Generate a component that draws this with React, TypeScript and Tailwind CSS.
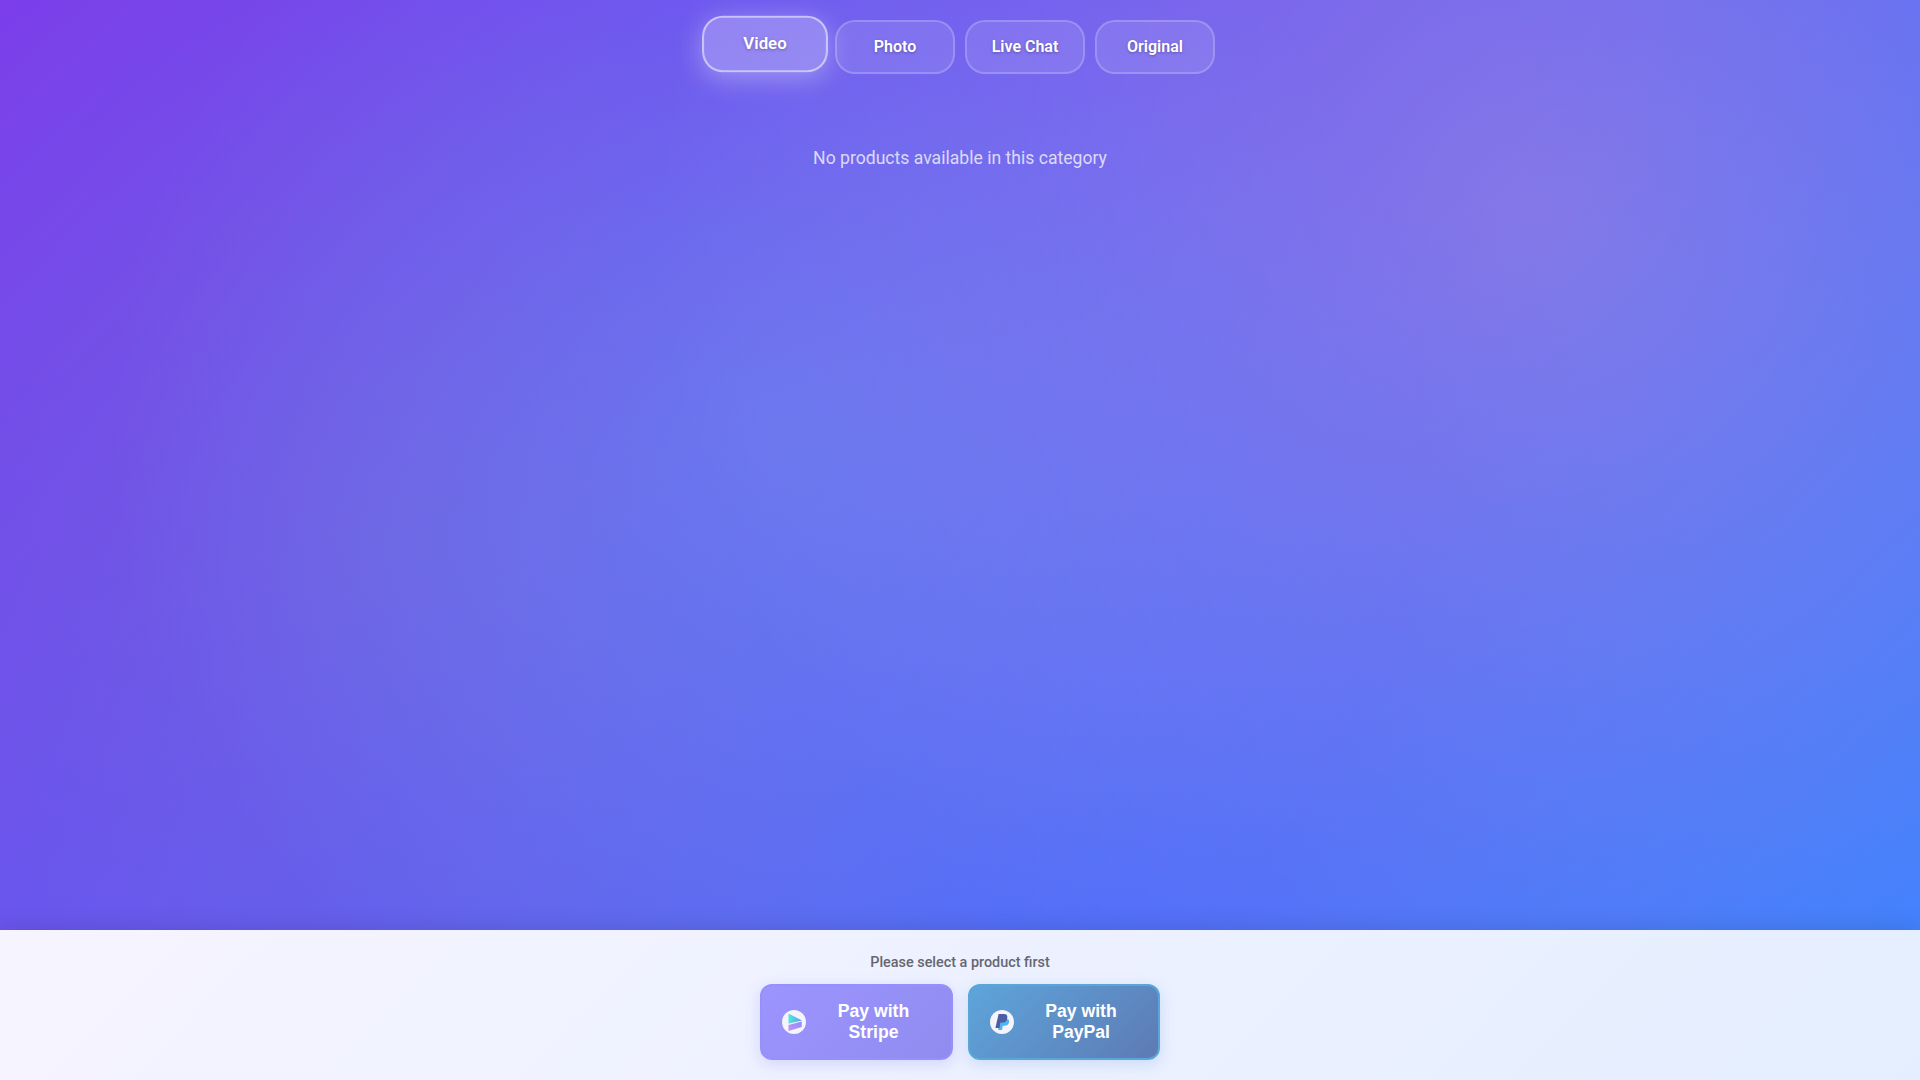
function StripeIcon() {
  return (
    <svg viewBox="0 0 24 24" className="w-6 h-6 shrink-0">
      <defs>
        <linearGradient id="stripeTop" x1="0" y1="0" x2="1" y2="0">
          <stop offset="0" stopColor="#56e6da" />
          <stop offset="1" stopColor="#5f9df5" />
        </linearGradient>
        <linearGradient id="stripeBottom" x1="0" y1="1" x2="1" y2="0">
          <stop offset="0" stopColor="#c094f6" />
          <stop offset="1" stopColor="#8f8cf6" />
        </linearGradient>
      </defs>
      <circle cx="12" cy="12" r="12" fill="#f5f3fb" />
      <path d="M6.5 3.5 L20 10.5 L6.5 13.8 Z" fill="url(#stripeTop)" />
      <path d="M6.5 15 L19.7 11.6 L19.7 17 L6.5 21 Z" fill="url(#stripeBottom)" />
    </svg>
  );
}

function PaypalIcon() {
  return (
    <svg viewBox="0 0 24 24" className="w-6 h-6 shrink-0">
      <circle cx="12" cy="12" r="12" fill="#f5f3fb" />
      <path d="M10 9 H16.5 C18.8 9 19.6 10.6 19 12.6 C18.4 15 16.6 15.8 14.6 15.8 H12.8 L12 20 H8.2 Z" fill="#4fb4f0" />
      <path d="M8.6 4 H14 C16.8 4 17.8 5.8 17.2 8.4 C16.6 11.4 14.6 12.6 12.2 12.6 H10.4 L9.5 18 H5.4 Z" fill="#4e5ca6" />
    </svg>
  );
}

const tabs = ['Video', 'Photo', 'Live Chat', 'Original'];

export default function App() {
  return (
    <div className="h-screen flex flex-col overflow-hidden font-['Roboto',sans-serif] bg-[radial-gradient(circle_at_40%_40%,rgba(120,219,255,0.2),transparent_50%),radial-gradient(circle_at_80%_20%,rgba(255,170,190,0.27),transparent_50%),radial-gradient(circle_at_20%_50%,rgba(120,119,198,0.35),transparent_50%),linear-gradient(135deg,#7c3aed_0%,#3b85ff_100%)]">
      <main className="flex-1 min-h-0 pt-5">
        <div className="flex justify-center gap-[10px]">
          {tabs.map((t, i) => (
            <button
              key={t}
              className={
                i === 0
                  ? "w-[120px] h-[54px] pb-px rounded-[20px] bg-white/25 border-2 border-white/50 text-white text-base font-semibold leading-[19px] [text-shadow:0_1px_3px_rgba(0,0,0,0.3)] -translate-y-[3px] scale-105 shadow-[0_5px_25px_rgba(255,255,255,0.35)]"
                  : "w-[120px] h-[54px] pb-px rounded-[20px] bg-white/10 border-2 border-white/20 text-white text-base font-semibold leading-[19px] [text-shadow:0_1px_3px_rgba(0,0,0,0.3)]"
              }
            >
              {t}
            </button>
          ))}
        </div>
        <p className="mt-[74px] text-center text-[17.6px] leading-[21px] text-white/75">No products available in this category</p>
      </main>
      <footer className="relative h-[150px] shrink-0 pt-6 bg-[linear-gradient(135deg,#f6f4ff,#e4eeff)] shadow-[0_-4px_20px_rgba(0,0,0,0.1)]">
        <p className="text-center text-[14.4px] font-medium leading-[17px] text-[#666670]">Please select a product first</p>
        <div className="mt-[13px] flex justify-center gap-[15px] font-['Liberation_Sans',sans-serif]">
          <button className="w-[193px] h-[76px] flex items-center gap-2 pl-5 pr-[18px] rounded-xl border-2 border-[#9790fa] bg-[linear-gradient(135deg,#9c94ff,#8f8cef)] text-white text-[17.6px] font-bold leading-[21px] shadow-[0_4px_15px_rgba(100,100,240,0.2)]">
            <StripeIcon />
            <span className="flex-1 text-center">Pay with Stripe</span>
          </button>
          <button className="w-[192px] h-[76px] flex items-center gap-2 pl-5 pr-[18px] rounded-xl border-2 border-[#5aa6d8] bg-[linear-gradient(135deg,#5da5db,#5e7ab4)] text-white text-[17.6px] font-bold leading-[21px] shadow-[0_4px_15px_rgba(70,130,210,0.2)]">
            <PaypalIcon />
            <span className="flex-1 text-center">Pay with PayPal</span>
          </button>
        </div>
      </footer>
    </div>
  );
}
